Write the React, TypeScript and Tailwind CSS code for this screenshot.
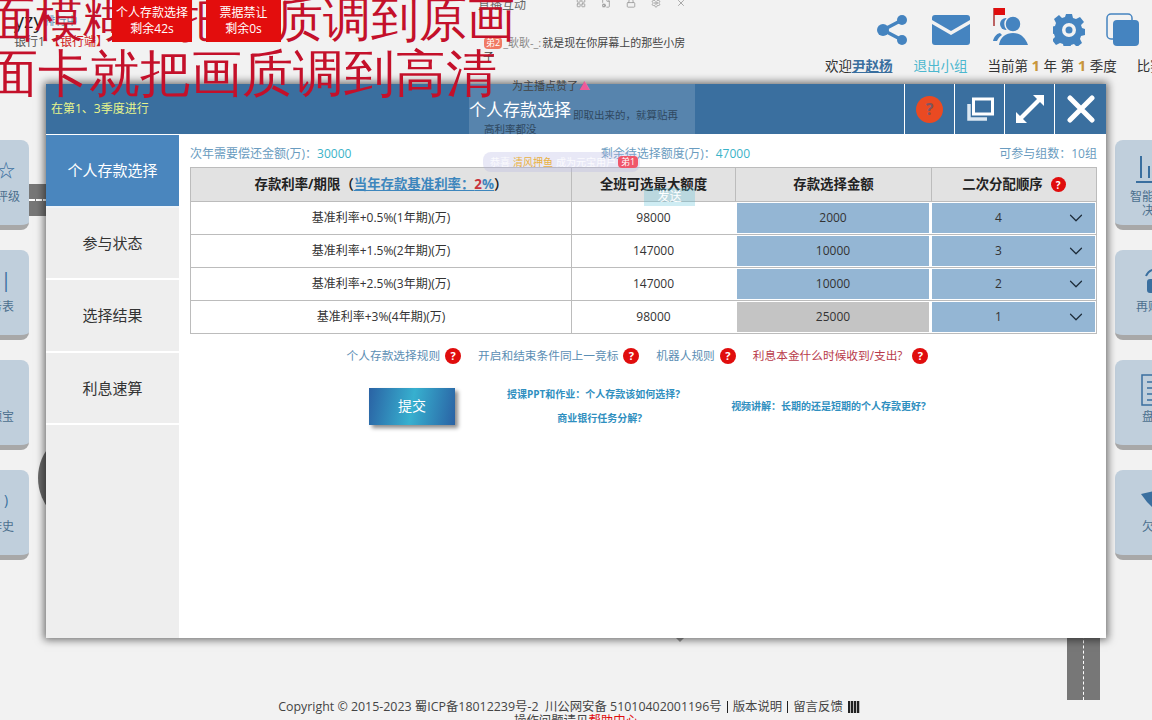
import { ChevronDown, FileCog, LayoutGrid, Lock, Settings, X } from "lucide-react";

const font = { fontFamily: '"Open Sans", "Noto Sans CJK SC", sans-serif' };

const rows = [
  { name: "基准利率+0.5%(1年期)(万)", max: "98000", amount: "2000", order: "4", locked: false },
  { name: "基准利率+1.5%(2年期)(万)", max: "147000", amount: "10000", order: "3", locked: false },
  { name: "基准利率+2.5%(3年期)(万)", max: "147000", amount: "10000", order: "2", locked: false },
  { name: "基准利率+3%(4年期)(万)", max: "98000", amount: "25000", order: "1", locked: true },
];

const tabs = ["个人存款选择", "参与状态", "选择结果", "利息速算"];

function Help({ size = "w-4 h-4 text-[11px]" }: { size?: string }) {
  return (
    <span className={`inline-flex shrink-0 items-center justify-center rounded-full bg-[#e00d0d] font-bold leading-none text-white ${size}`}>
      ?
    </span>
  );
}

function SideCard({ label, icon, side }: { label: React.ReactNode; icon: React.ReactNode; side: "left" | "right" }) {
  return (
    <div
      className={`flex h-[90px] flex-col items-center gap-1 border-b-[5px] border-[#a8a8a8] bg-[#c0cfdc] pt-[14px] ${
        side === "left" ? "w-[66px] rounded-r-lg" : "w-[78px] rounded-l-lg"
      }`}
    >
      <div className="flex h-8 items-center justify-center text-[#3a6f9f]">{icon}</div>
      <div className="whitespace-nowrap text-center text-xs leading-[14px] text-[#4c6f8e]">{label}</div>
    </div>
  );
}

function Header() {
  return (
    <div className="flex h-[84px] justify-between overflow-hidden">
      <div className="pl-[14px] pt-[9px] text-[#555]">
        <div className="flex items-center gap-[1px] text-[20px] leading-[24px] text-[#222]">
          yzy<span className="text-[11px] text-[#5b8eb4]">排行中</span>
        </div>
        <div className="mt-[1px] text-xs leading-4">
          银行1 <span className="text-[#d01818]">【银行端】</span>
        </div>
      </div>
      <div className="mr-[-4px] flex w-[330px] flex-col pt-[13px]">
        <div className="flex items-center gap-[23px] pl-[51px] text-[#4584c0]">
          <svg width="32" height="32" viewBox="0 0 32 32" fill="currentColor">
            <circle cx="25" cy="6" r="5" />
            <circle cx="6" cy="16" r="6" />
            <circle cx="25" cy="26" r="5" />
            <path d="M6 16 25 6M6 16l19 10" stroke="currentColor" strokeWidth="3.5" />
          </svg>
          <svg width="38" height="30" viewBox="0 0 38 30" fill="currentColor">
            <path d="M3 0h32a3 3 0 0 1 3 3v2L19 16 0 5V3a3 3 0 0 1 3-3Z" />
            <path d="M0 9l19 11L38 9v18a3 3 0 0 1-3 3H3a3 3 0 0 1-3-3Z" />
          </svg>
          <svg width="38" height="38" viewBox="0 0 38 38" className="mt-[-6px]">
            <path d="M1 0v18" stroke="#a33" strokeWidth="1.5" />
            <path d="M1 0h11v7H1Z" fill="#e00d0d" />
            <circle cx="13" cy="16" r="6" fill="currentColor" />
            <circle cx="20" cy="16" r="8" fill="currentColor" stroke="#f2f2f2" strokeWidth="1.5" />
            <path d="M6 37c1-8 7-12 14-12s12 4 15 12Z" fill="currentColor" />
            <path d="M0 33c1-4 3-7 7-8l2 2c-3 2-4 4-5 6Z" fill="currentColor" />
          </svg>
          <svg width="32" height="32" viewBox="0 0 32 32" fill="currentColor" className="ml-[-1px]">
            <path
              fillRule="evenodd"
              d="M13 0h6l1 4 3 1 4-2 4 5-3 3 1 3 3 1v6l-4 1-1 3 2 4-5 4-3-3-3 1-1 3h-6l-1-4-3-1-4 2-4-5 3-3-1-3-3-1v-6l4-1 1-3-2-4 5-4 3 3 3-1ZM16 9a7 7 0 1 0 0 14 7 7 0 0 0 0-14Zm0 3.500a3.500 3.500 0 1 1 0 7 3.500 3.500 0 0 1 0-7Z"
            />
          </svg>
          <svg width="33" height="33" viewBox="0 0 33 33" className="ml-[-2px]">
            <rect x="1" y="1" width="25" height="25" rx="4" fill="none" stroke="currentColor" strokeWidth="1.500" />
            <rect x="7" y="7" width="26" height="26" rx="4" fill="currentColor" />
          </svg>
        </div>
        <div className="mt-[9px] flex items-center whitespace-nowrap text-[13.5px] leading-5 text-[#333]">
          <span className="ml-[-1px]">
            欢迎<span className="font-bold text-[#3a6f9f] underline">尹赵杨</span>
          </span>
          <span className="ml-[21px] text-[#4db8cf]">退出小组</span>
          <span className="ml-[20px]">
            当前第 <span className="text-[15px] font-bold text-[#c8963c]">1</span> 年 第{" "}
            <span className="text-[15px] font-bold text-[#c8963c]">1</span> 季度
          </span>
          <span className="ml-[20px]">比赛</span>
        </div>
      </div>
    </div>
  );
}

function DepositTable() {
  return (
    <div className="mt-[5px] border border-[#bcbcbc] text-xs text-[#333]">
      <div className="grid h-[33px] grid-cols-[380px_164px_196px_1fr] bg-[#e2e2e2] text-[13.4px] font-bold text-[#222]">
        <div className="flex items-center justify-center">
          存款利率/期限（
          <span className="text-[#3d86bd] underline">
            当年存款基准利率：<span className="text-[#c8343c]">2</span>%
          </span>
          ）
        </div>
        <div className="flex items-center justify-center border-l border-[#bcbcbc]">全班可选最大额度</div>
        <div className="flex items-center justify-center border-l border-[#bcbcbc]">存款选择金额</div>
        <div className="flex items-center justify-center gap-2 border-l border-[#bcbcbc]">
          二次分配顺序 <Help size="w-[15px] h-[15px] text-[10px]" />
        </div>
      </div>
      {rows.map((row) => (
        <div key={row.name} className="grid h-[33px] grid-cols-[380px_164px_196px_1fr] border-t border-[#bcbcbc]">
          <div className="flex items-center justify-center">{row.name}</div>
          <div className="flex items-center justify-center border-l border-[#bcbcbc]">{row.max}</div>
          <div className={`flex items-center justify-center border-x-2 border-y border-white ${row.locked ? "bg-[#c4c4c4]" : "bg-[#94b6d4]"}`}>
            {row.amount}
          </div>
          <div className="relative flex items-center justify-center border border-white bg-[#94b6d4]">
            <span className="pr-[30px]">{row.order}</span>
            <ChevronDown className="absolute right-[8px] h-[22px] w-[22px] text-[#1c2a38]" strokeWidth={1.3} />
          </div>
        </div>
      ))}
    </div>
  );
}

function Modal() {
  return (
    <div className="absolute left-[46px] top-[84px] flex h-[554px] w-[1060px] flex-col bg-white shadow-[0_0_8px_2px_rgba(0,0,0,0.55)]">
      <div className="relative flex h-[50px] shrink-0 items-center justify-between bg-[#3a6f9f]">
        <span className="pl-[5px] text-xs text-[#e8f58c]">在第1、3季度进行</span>
        <span className="absolute left-[423px] top-[14px] text-[17px] leading-6 text-white">个人存款选择</span>
        <div className="flex h-full">
          <div className="flex w-[50px] items-center justify-center border-l border-white">
            <span className="flex h-[27px] w-[27px] items-center justify-center rounded-full bg-[#ea4a22] text-base font-bold text-[#7e5660]">
              ?
            </span>
          </div>
          <div className="flex w-[50px] items-center justify-center border-l border-white">
            <svg width="28" height="24" viewBox="0 0 28 24" fill="none">
              <path d="M3 7v15h18" stroke="#dce8f2" strokeWidth="3.500" />
              <rect x="7.500" y="2" width="19" height="15" stroke="#fff" strokeWidth="3" />
            </svg>
          </div>
          <div className="flex w-[50px] items-center justify-center border-l border-white">
            <svg width="28" height="28" viewBox="0 0 28 28" fill="#fff">
              <path d="M17 0h11v11l-4-4L7 24l4 4H0V17l4 4L21 4Z" />
            </svg>
          </div>
          <div className="flex w-[52px] items-center justify-center border-l border-white">
            <svg width="28" height="28" viewBox="0 0 28 28" stroke="#fff" strokeWidth="5" strokeLinecap="round">
              <path d="M3 3l22 22M25 3 3 25" />
            </svg>
          </div>
        </div>
      </div>
      <div className="flex min-h-0 flex-1">
        <div className="mt-px w-[133px] shrink-0 bg-[#eeeeee]">
          {tabs.map((tab, i) => (
            <div
              key={tab}
              className={`flex h-[72.5px] items-center justify-center border-b-2 text-[15px] ${
                i === 0 ? "border-[#eef3f8] bg-[#4a86be] text-white" : "border-white text-[#333]"
              }`}
            >
              {tab}
            </div>
          ))}
        </div>
        <div className="min-w-0 flex-1 pl-[11px] pr-[9px] pt-[12px]">
          <div className="flex h-4 items-center justify-between text-xs leading-4 text-[#6a9cc0]">
            <span>
              次年需要偿还金额(万)：<span className="text-[#3ab3c8]">30000</span>
            </span>
            <span>
              剩余待选择额度(万)：<span className="text-[#3ab3c8]">47000</span>
            </span>
            <span>可参与组数：10组</span>
          </div>
          <DepositTable />
          <div className="mt-[13px] flex items-center justify-center pr-[12px] text-[11.7px] leading-4 text-[#5b8eb4]">
            <span>个人存款选择规则</span>
            <span className="ml-[5px]"><Help /></span>
            <span className="ml-[17px]">开启和结束条件同上一竞标</span>
            <span className="ml-[5px]"><Help /></span>
            <span className="ml-[17px]">机器人规则</span>
            <span className="ml-[5px]"><Help /></span>
            <span className="ml-[17px] text-[#b83a4a]">利息本金什么时候收到/支出?</span>
            <span className="ml-[10px]"><Help /></span>
          </div>
          <div className="mt-[23px] flex items-center text-[10px] font-bold text-[#2f8fc0]">
            <div className="ml-[179px] flex h-[37px] w-[86px] items-center justify-center bg-[linear-gradient(100deg,#2a62a4,#37b0cf_50%,#2a62a4)] text-sm font-normal text-white shadow-[3px_3px_4px_rgba(0,0,0,0.45)]">
              提交
            </div>
            <div className="ml-[52px] flex flex-col items-center gap-[9px]">
              <span>授课PPT和作业：个人存款该如何选择?</span>
              <span className="pl-[12px]">商业银行任务分解?</span>
            </div>
            <span className="ml-[51px]">视频讲解：长期的还是短期的个人存款更好?</span>
          </div>
        </div>
      </div>
    </div>
  );
}

function StreamOverlay() {
  return (
    <div className="pointer-events-none text-[11px] leading-[14px] text-[#555]">
      <div className="absolute left-[478px] top-[-3px] text-xs text-[#666]">直播互动</div>
      <div className="absolute left-[576px] top-[-2px] flex items-center gap-[15px] text-[#999]">
        <LayoutGrid className="h-[10px] w-[10px]" />
        <FileCog className="h-[10px] w-[10px]" />
        <Lock className="h-[10px] w-[10px]" />
        <Settings className="h-[10px] w-[10px]" />
        <X className="h-[10px] w-[10px]" />
      </div>
      <div className="absolute left-[484px] top-[36px] flex items-center gap-[1px] whitespace-nowrap">
        <span className="rounded-sm bg-[#f07a64] px-[2px] text-[9px] leading-3 text-white">弟2</span>
        <span className="text-[#888]">_耿耿-_:</span>
        <span className="text-[#444]">就是现在你屏幕上的那些小房</span>
      </div>
      <div className="absolute left-[483px] top-[50px] text-[#444]">子</div>
      <div className="absolute left-[469px] top-[84px] h-[50px] w-[226px] bg-white/15" />
      <div className="absolute left-[512px] top-[79px] flex items-center whitespace-nowrap text-[#444]">
        为主播点赞了<span className="ml-[1px] text-[#ee5a98]">▲</span>
      </div>
      <div className="absolute left-[484px] top-[108px] w-[200px] text-[10.500px] text-[#2f4860]">
        <div className="whitespace-nowrap pl-[89px]">即取出来的，就算贴再</div>
        <div>高利率都没</div>
      </div>
      <div className="absolute left-[483px] top-[152px] flex h-[20px] w-[157px] items-center whitespace-nowrap rounded-lg bg-[#b4b4e0]/30 pl-[7px] text-[10px] text-white/80">
        恭喜 <span className="mx-[3px] text-[#e8b040]">清风押鱼</span> 成为元宝用户
      </div>
      <div className="absolute left-[618px] top-[156px] rounded-sm bg-[#f0566a] px-[3px] text-[9px] leading-3 text-white">弟1</div>
      <div className="absolute left-[644px] top-[188px] flex h-[18px] w-[51px] items-center justify-center bg-[#5cc0d8]/30 text-xs text-white">
        发送
      </div>
    </div>
  );
}

export default function App() {
  return (
    <div className="relative h-[720px] w-[1152px] overflow-hidden bg-[#f2f2f2]" style={font}>
      <Header />

      {/* road behind the cards */}
      <div className="absolute left-[29px] top-[184px] h-[32px] w-[20px] bg-[#777]">
        <div className="mt-[15px] border-t-2 border-dashed border-white" />
      </div>
      <div className="absolute left-[38px] top-[428px] h-[100px] w-[120px] rounded-full bg-[#6a6a6a]" />
      <div className="absolute left-[1067px] top-[630px] h-[70px] w-[33px] bg-[#777]">
        <div className="ml-[16px] h-full border-l border-dashed border-white" />
      </div>

      <div className="mt-[56px] flex justify-between">
        <div className="ml-[-37px] flex flex-col gap-[20px]">
          <SideCard side="left" label="信用评级" icon={<span className="pl-5 text-lg text-[#3a6f9f]">☆</span>} />
          <SideCard side="left" label="财务表" icon={<span className="pl-5 text-xl leading-none">|</span>} />
          <SideCard side="left" label="余额宝" icon={null} />
          <SideCard side="left" label="操作史" icon={<span className="pl-5 text-sm">)</span>} />
        </div>
        <div className="mr-[-41px] flex flex-col gap-[20px]">
          <SideCard
            side="right"
            label={
              <>
                智能融资
                <br />
                决策
              </>
            }
            icon={
              <svg width="36" height="28" viewBox="0 0 36 28" stroke="currentColor" strokeWidth="2">
                <path d="M5 0v22M13 10v12M21 6v16M0 26h36" />
              </svg>
            }
          />
          <SideCard
            side="right"
            label="再贴现"
            icon={
              <svg width="24" height="30" viewBox="0 0 24 30" fill="none" stroke="currentColor" strokeWidth="2">
                <path d="M4 11c2-5 6-7 12-7" />
                <rect x="6" y="15" width="8" height="12" rx="2" fill="currentColor" />
              </svg>
            }
          />
          <SideCard
            side="right"
            label="盘点"
            icon={
              <svg width="26" height="32" viewBox="0 0 26 32" fill="none" stroke="currentColor" strokeWidth="1.500">
                <rect x="1" y="1" width="24" height="30" />
                <path d="M6 8h14M6 14h14M6 20h14M6 26h14" />
              </svg>
            }
          />
          <SideCard
            side="right"
            label="欠款"
            icon={
              <svg width="30" height="20" viewBox="0 0 30 20" fill="currentColor">
                <path d="M2 4l18-4 10 6-2 12-12 2L8 12Z" />
              </svg>
            }
          />
        </div>
      </div>

      <div className="absolute inset-x-0 bottom-[-8px] flex flex-col items-center text-[12.400px] leading-[14px] text-[#444]">
        <div className="flex items-center whitespace-nowrap pr-[14px]">
          Copyright © 2015-2023 蜀ICP备18012239号-2&nbsp;&nbsp;川公网安备 51010402001196号
          <span className="mx-[5px] h-3 border-l border-[#222]" />
          版本说明
          <span className="mx-[5px] h-3 border-l border-[#222]" />
          留言反馈
          <span className="ml-[5px] h-3 w-3 bg-[repeating-linear-gradient(90deg,#222_0_2px,#bbb_2px_3px)]" />
        </div>
        <div>
          操作问题请见<span className="text-[#e00d0d]">帮助中心</span>
        </div>
      </div>

      <div className="absolute left-[675px] top-[637px] h-0 w-0 border-x-[5px] border-t-[5px] border-x-transparent border-t-[#999]" />

      <Modal />
      <StreamOverlay />

      {/* burned-in subtitle text from the recording */}
      <div className="pointer-events-none absolute left-[-13px] top-[-9px] whitespace-nowrap font-serif text-[#c4102a]">
        <div className="text-[48px] leading-[60px]">面模糊就把画质调到原画</div>
        <div className="mt-[-6px] text-[51px] leading-[60px]">面卡就把画质调到高清</div>
      </div>

      {/* timer badges sit above the subtitle */}
      <div className="absolute left-[112px] top-0 flex h-[42px] w-[80px] flex-col items-center justify-center bg-[#e30d0d] text-xs leading-4 text-white">
        <span>个人存款选择</span>
        <span>剩余42s</span>
      </div>
      <div className="absolute left-[206px] top-0 flex h-[42px] w-[75px] flex-col items-center justify-center bg-[#e30d0d] text-xs leading-4 text-white">
        <span>票据禁让</span>
        <span>剩余0s</span>
      </div>
    </div>
  );
}
